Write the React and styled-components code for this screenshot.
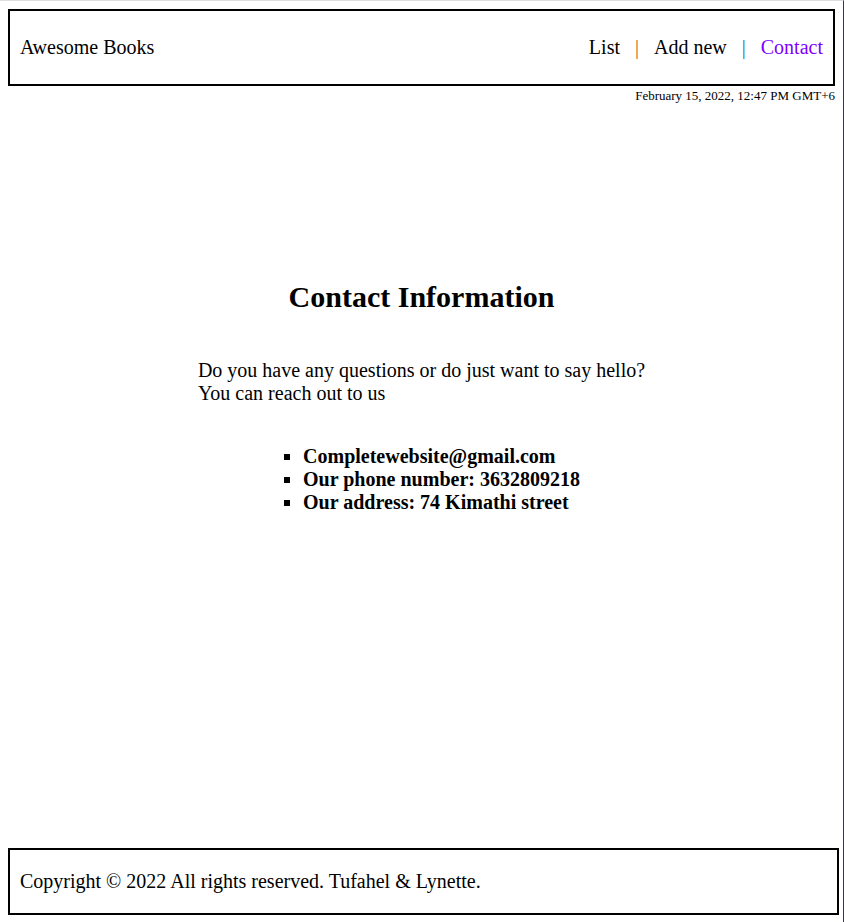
import React from 'react'
import styled, { createGlobalStyle } from 'styled-components'

const GlobalStyle = createGlobalStyle`
  * {
    box-sizing: border-box;
  }

  html {
    border-top: 1px solid #dcdee1;
    border-right: 1px solid #3a3644;
  }

  body {
    margin: 8px 4px 7px 8px;
    font-family: "Liberation Serif", "Times New Roman", serif;
    color: #000;
    background: #fff;
  }
`

const links = [
  { label: 'List' },
  { label: 'Add new', sep: '#c2621a' },
  { label: 'Contact', sep: '#2469ad', active: true },
]

const contacts = [
  'Completewebsite@gmail.com',
  'Our phone number: 3632809218',
  'Our address: 74 Kimathi street',
]

export default function App() {
  return (
    <Page>
      <GlobalStyle />
      <Header>
        <Brand>Awesome Books</Brand>
        <Nav>
          {links.map((link) => (
            <React.Fragment key={link.label}>
              {link.sep && <Sep color={link.sep}>|</Sep>}
              <NavLink active={link.active}>{link.label}</NavLink>
            </React.Fragment>
          ))}
        </Nav>
      </Header>

      <DateLine>February 15, 2022, 12:47 PM GMT+6</DateLine>

      <Main>
        <Title>Contact Information</Title>
        <Intro>
          Do you have any questions or do just want to say hello?
          <br />
          You can reach out to us
        </Intro>
        <ContactList>
          {contacts.map((item) => (
            <li key={item}>{item}</li>
          ))}
        </ContactList>
      </Main>

      <Footer>Copyright © 2022 All rights reserved. Tufahel &amp; Lynette.</Footer>
    </Page>
  )
}

const Page = styled.div`
  min-height: calc(100vh - 16px);
  display: flex;
  flex-direction: column;
`

const Header = styled.header`
  height: 77px;
  margin-right: 4px;
  border: 2px solid #000;
  padding: 0 10px;
  display: flex;
  align-items: center;
  justify-content: space-between;
  font-size: 20px;
`

const Brand = styled.div``

const Nav = styled.nav`
  display: flex;
  align-items: center;
`

const NavLink = styled.span`
  color: ${(p) => (p.active ? '#7d00ff' : '#000')};
  cursor: pointer;
`

const Sep = styled.span`
  color: ${(p) => p.color};
  margin: 0 15px;
`

const DateLine = styled.div`
  margin: 2px 4px 0 0;
  text-align: right;
  font-size: 13px;
  line-height: 15px;
`

const Main = styled.main`
  display: flex;
  flex-direction: column;
  align-items: center;
  margin-right: 4px;
  padding-top: 178px;
`

const Title = styled.h2`
  margin: 0;
  font-size: 30px;
  line-height: 32px;
  font-weight: bold;
`

const Intro = styled.p`
  margin: 46px 0 0;
  font-size: 20px;
  line-height: 23px;
`

const ContactList = styled.ul`
  margin: 40px 0 0;
  padding-left: 40px;
  list-style: square;
  font-size: 20px;
  line-height: 23px;
  font-weight: bold;
`

const Footer = styled.footer`
  margin-top: auto;
  height: 67px;
  border: 2px solid #000;
  padding: 0 10px;
  display: flex;
  align-items: center;
  font-size: 20px;
`
